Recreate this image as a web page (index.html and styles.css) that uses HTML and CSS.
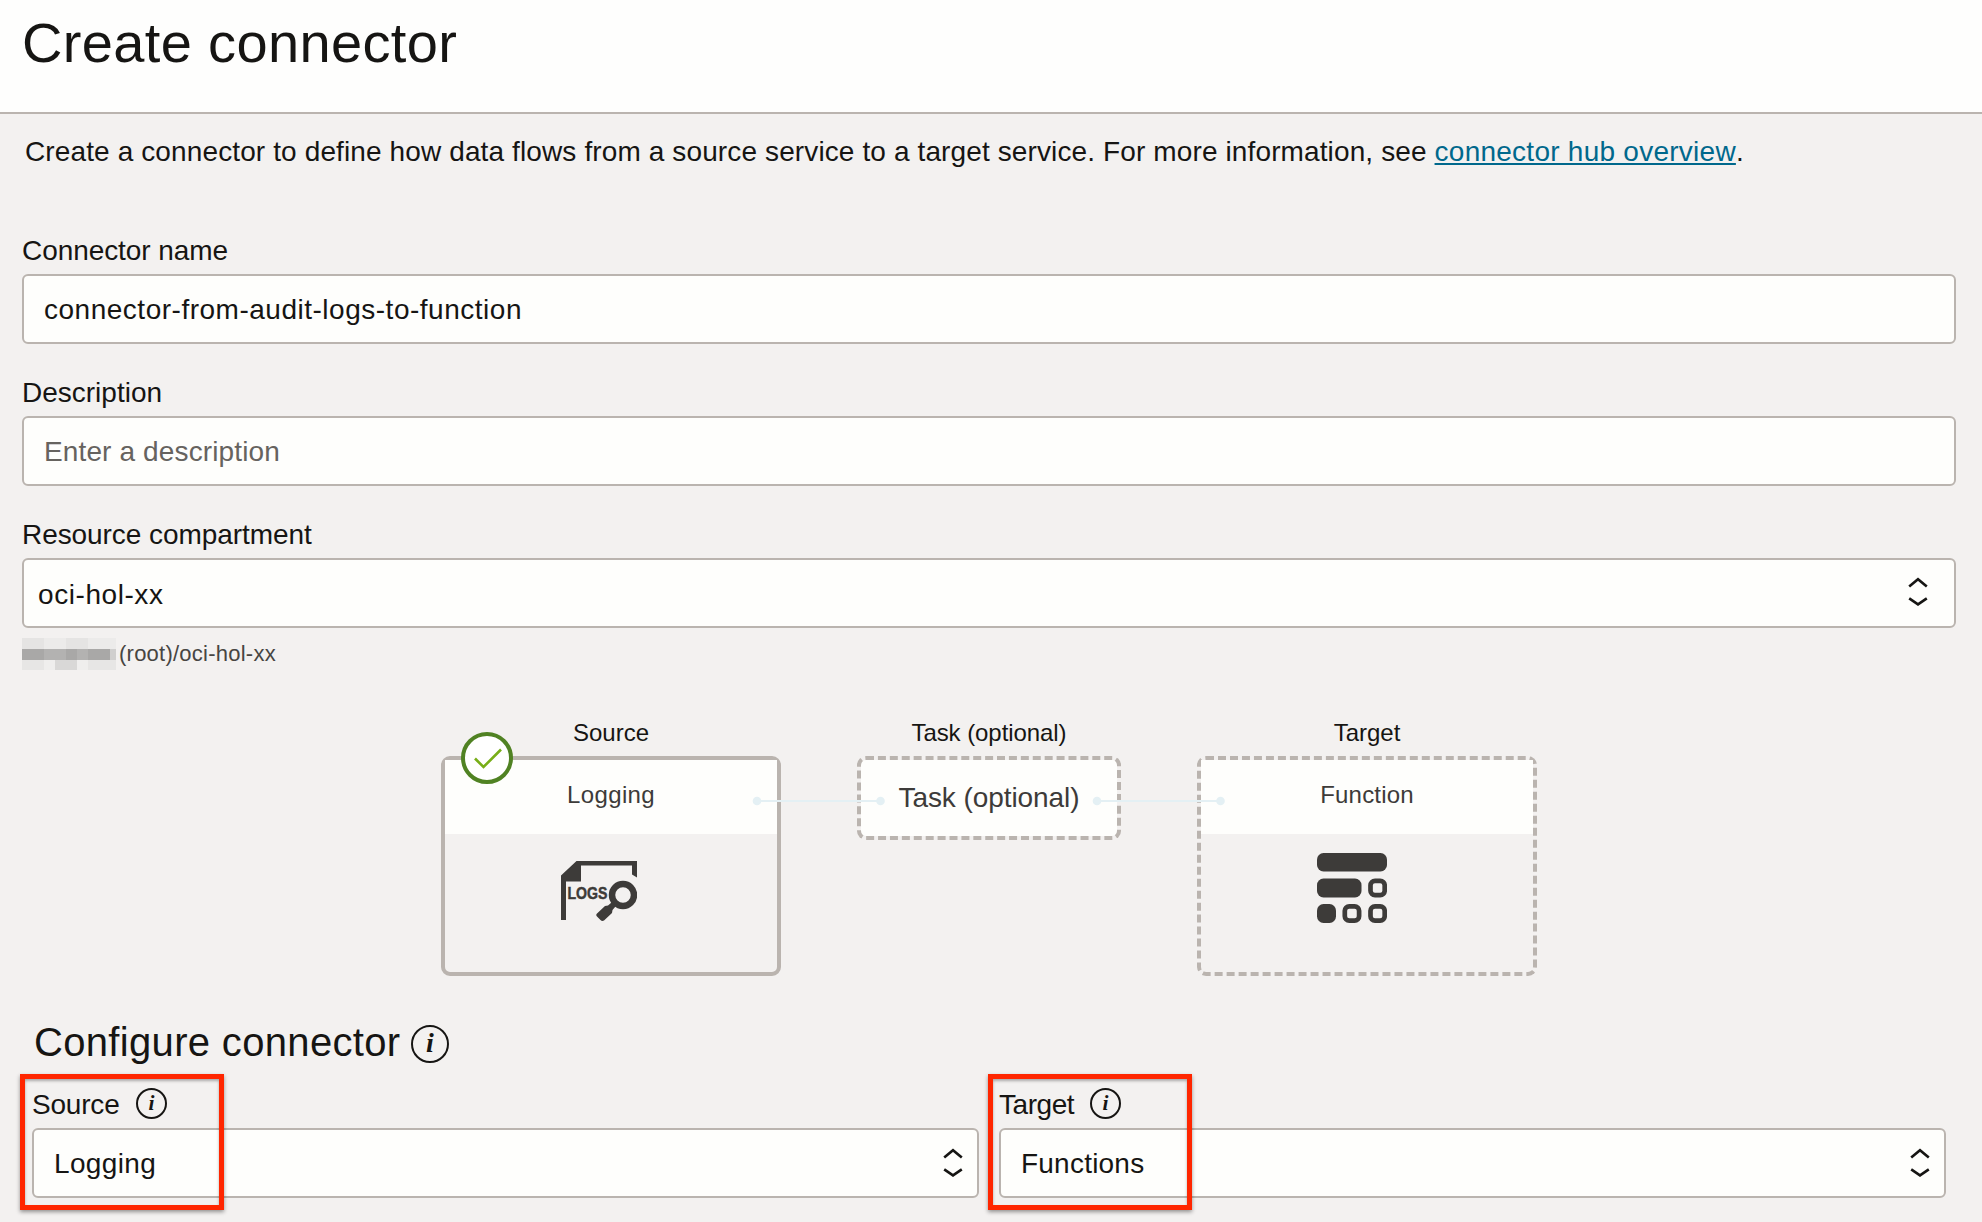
FILE: index.html
```html
<!DOCTYPE html>
<html lang="en">
<head>
<meta charset="utf-8">
<title>Create connector</title>
<link rel="stylesheet" href="styles.css">
</head>
<body>
<header class="page-header"><h1 class="page-title">Create connector</h1></header>
<main class="page">
  <p class="intro">Create a connector to define how data flows from a source service to a target service. For more information, see <a class="link" href="#">connector hub overview</a>.</p>

  <section class="fields">
    <div class="field">
      <div class="label label-tight">Connector name</div>
      <div class="control control-name"><span>connector-from-audit-logs-to-function</span></div>
    </div>
    <div class="field">
      <div class="label">Description</div>
      <div class="control placeholder"><span>Enter a description</span></div>
    </div>
    <div class="field">
      <div class="label label-tight">Resource compartment</div>
      <div class="control control-compartment"><span>oci-hol-xx</span>
        <svg class="chevrons" width="20" height="30" viewBox="0 0 20 30"><path d="M1.2 9.6 10 2.2l8.8 7.4M1.2 21.4 10 27.4l8.8-6"/></svg>
      </div>
      <div class="helper">
        <svg class="redacted" width="94" height="32" viewBox="0 0 94 32" shape-rendering="crispEdges">
          <path fill="#e5e4e3" d="M0 0h22v11H0zM44 0h22v11H44z"/><path fill="#ecebea" d="M22 0h22v11H22zM66 0h28v11H66z"/>
          <path fill="#a9a8a7" d="M0 11h22v11H0zM44 11h11v11H44zM66 11h22v11H66z"/><path fill="#b3b2b1" d="M22 11h22v11H22zM55 11h11v11H55z"/><path fill="#d0cfce" d="M88 11h6v11h-6z"/>
          <path fill="#e7e6e5" d="M0 22h22v10H0zM66 22h28v10H66z"/><path fill="#efeeed" d="M22 22h11v10H22zM55 22h11v10H55z"/><path fill="#d9d8d7" d="M33 22h22v10H33z"/>
        </svg>
        <span class="helper-path">(root)/oci-hol-xx</span>
      </div>
    </div>
  </section>

  <section class="flow">
    <div class="stage stage-wide">
      <div class="stage-label">Source</div>
      <div class="card">
        <div class="card-head card-head-logging">Logging</div>
        <svg class="card-icon logs-icon" width="76" height="60" viewBox="0 0 76 60">
          <path d="M0 59V14.500L15.500 0H76v16.500l-5-3V4.500H20V20.500H5V59z"/>
          <text x="6.500" y="38" textLength="40" lengthAdjust="spacingAndGlyphs">LOGS</text>
          <circle cx="62" cy="34" r="11" fill="none" stroke="#3d3b39" stroke-width="6.500"/>
          <path d="M50.500 41.500 54.500 45.500 51.500 49 51 52 43 59.500q-2 1-3.500-.5l-3.500-3.500q-1.500-1.500 0-3l8-7.500 3-.5z"/>
        </svg>
        <svg class="check" width="52" height="52" viewBox="0 0 52 52"><circle cx="26" cy="26" r="24"/><path d="M14 26.500 22.500 35 40 17.500"/></svg>
      </div>
    </div>
    <div class="stage stage-task">
      <div class="stage-label label-tight">Task (optional)</div>
      <div class="card dashed task">Task (optional)</div>
    </div>
    <div class="stage stage-wide">
      <div class="stage-label">Target</div>
      <div class="card dashed">
        <div class="card-head">Function</div>
        <svg class="card-icon function-icon" width="70" height="70" viewBox="0 0 70 70">
          <rect width="70" height="18.500" rx="6.500"/><rect y="25.500" width="44.500" height="19" rx="6.500"/><rect y="51" width="19" height="19" rx="6.500"/>
          <g fill="none" stroke="#3d3b39" stroke-width="4.700"><rect x="53.500" y="27.850" width="14.200" height="14.300" rx="4.500"/><rect x="27.800" y="53.350" width="14.300" height="14.300" rx="4.500"/><rect x="53.500" y="53.350" width="14.200" height="14.300" rx="4.500"/></g>
        </svg>
      </div>
    </div>
    <svg class="wires" width="474" height="10" viewBox="0 0 474 10"><path d="M5 5h123M345 5h123"/><circle cx="5" cy="5" r="4.300"/><circle cx="128.500" cy="5" r="4.300"/><circle cx="345" cy="5" r="4.300"/><circle cx="468.500" cy="5" r="4.300"/></svg>
  </section>

  <section class="configure">
    <h2 class="section-title"><span>Configure connector</span>
      <svg class="info" width="38" height="38" viewBox="0 0 38 38"><circle cx="19" cy="19" r="18"/><text x="19" y="27" font-size="28">i</text></svg>
    </h2>
    <div class="columns">
      <div class="field">
        <div class="label"><span class="label-source">Source</span>
          <svg class="info" width="31" height="31" viewBox="0 0 31 31"><circle cx="15.500" cy="15.500" r="14.500"/><text x="15.500" y="22" font-size="21.500">i</text></svg></div>
        <div class="control control-logging"><span>Logging</span>
          <svg class="chevrons" width="20" height="30" viewBox="0 0 20 30"><path d="M1.200 9.600 10 2.200l8.800 7.400M1.200 21.400 10 27.400l8.800-6"/></svg></div>
        <div class="highlight"></div>
      </div>
      <div class="field">
        <div class="label"><span class="label-target">Target</span>
          <svg class="info" width="31" height="31" viewBox="0 0 31 31"><circle cx="15.500" cy="15.500" r="14.500"/><text x="15.500" y="22" font-size="21.500">i</text></svg></div>
        <div class="control control-functions"><span>Functions</span>
          <svg class="chevrons" width="20" height="30" viewBox="0 0 20 30"><path d="M1.200 9.600 10 2.200l8.800 7.400M1.200 21.400 10 27.400l8.800-6"/></svg></div>
        <div class="highlight highlight-target"></div>
      </div>
    </div>
  </section>
</main>
</body>
</html>
```
FILE: styles.css
```css
* { box-sizing: border-box; }

body {
  margin: 0;
  width: 1982px;
  height: 1222px;
  overflow: hidden;
  background: #f3f1f0;
  color: #161513;
  font: 28px/36px "Liberation Sans", Arial, sans-serif;
}

h1, h2, p { margin: 0; font-weight: 400; }
svg { display: block; flex: none; }

.page-header {
  height: 114px;
  padding: 11px 22px 0;
  background: #fefefd;
  border-bottom: 2px solid #bab4af;
}
.page-title { font-size: 56px; line-height: 64px; letter-spacing: 0.35px; }

.page { padding: 20px 26px 0 22px; }
.intro { padding-left: 3px; white-space: nowrap; letter-spacing: 0.12px; }
.link {
  color: #00688c;
  letter-spacing: 0.255px;
  text-decoration: underline;
  text-decoration-thickness: 2px;
  text-underline-offset: 2px;
  text-decoration-skip-ink: none;
}

.fields { display: grid; gap: 30px; margin-top: 62px; }
.label { display: flex; align-items: center; height: 36px; margin-bottom: 6px; padding-top: 2px; }
.label-tight { letter-spacing: -0.07px; }
.control {
  display: flex;
  align-items: center;
  justify-content: space-between;
  height: 70px;
  padding: 0 26px 0 20px;
  background: #fefefc;
  border: 2px solid #bab4af;
  border-radius: 6px;
}
.control span { padding-top: 2px; }
.control-name { letter-spacing: 0.51px; }
.control-compartment { padding-left: 14px; letter-spacing: 0.57px; }
.control-compartment span { padding-top: 4px; }
.control-compartment .chevrons { margin-bottom: 2px; }
.control-logging { letter-spacing: 0.35px; }
.control-functions { letter-spacing: 0.22px; }
.placeholder { color: #66635f; letter-spacing: 0.13px; }
.chevrons path { fill: none; stroke: #161513; stroke-width: 2.6; }
.helper { display: flex; gap: 3px; margin-top: 10px; height: 32px; font-size: 22px; line-height: 32px; color: #474542; }
.helper-path { letter-spacing: 0.24px; }

.flow { position: relative; display: flex; justify-content: center; gap: 76px; margin-top: 48px; height: 258px; }
.stage-wide { width: 340px; }
.stage-task { width: 264px; }
.stage-label { height: 38px; font-size: 24px; line-height: 30px; text-align: center; }
.card { position: relative; height: 220px; border: 4px solid #bab4af; border-radius: 9px; color: #3d3b39; font-size: 24px; }
.dashed { border-style: dashed; }
.card-head { height: 74px; padding-top: 15px; line-height: 40px; text-align: center; letter-spacing: 0.2px; background: #fefefc; }
.card-head-logging { letter-spacing: 0.4px; }
.card-icon { fill: #3d3b39; }
.logs-icon { margin: 27px 0 0 116px; }
.logs-icon text { font: bold 17px "Liberation Sans", Arial, sans-serif; stroke: #3d3b39; stroke-width: 0.5; }
.function-icon { margin: 19px 0 0 116px; }
.task { height: 84px; font-size: 28px; text-align: center; line-height: 76px; letter-spacing: -0.07px; background: #fefefc; background-clip: padding-box; }
.check { position: absolute; left: 16px; top: -28px; }
.check circle { fill: #fff; stroke: #508223; stroke-width: 4; }
.check path { fill: none; stroke: #78ae18; stroke-width: 2.6; }
.wires { position: absolute; left: 730px; top: 78px; }
.wires circle { fill: #e4f0f4; }
.wires path { stroke: #e4f0f4; stroke-width: 2; }

.configure { margin-top: 42px; padding: 0 10px; }
.section-title { display: flex; align-items: center; gap: 10px; height: 48px; padding-left: 2px; font-size: 40px; line-height: 48px; letter-spacing: 0.33px; }
.section-title .info { margin-top: 4px; }
.info circle { fill: none; stroke: #161513; stroke-width: 2; }
.info text { fill: #161513; font-family: "Liberation Serif", serif; font-style: italic; font-weight: 700; letter-spacing: 0; text-anchor: middle; }
.columns { display: grid; grid-template-columns: 947px 947px; gap: 20px; margin-top: 20px; }
.columns .field { position: relative; }
.columns .label { gap: 16px; }
.columns .info { margin-bottom: 4px; }
.columns .control { padding-right: 14px; }
.label-source { letter-spacing: -0.2px; }
.label-target { letter-spacing: -0.45px; }
.highlight {
  position: absolute;
  left: -12px;
  top: -12px;
  width: 204px;
  height: 136px;
  border: 5px solid #ff2600;
  box-shadow: 0 2px 4px rgba(0, 0, 0, .4), inset 0 2px 3px rgba(0, 0, 0, .3);
}
.highlight-target { left: -11px; }
```
